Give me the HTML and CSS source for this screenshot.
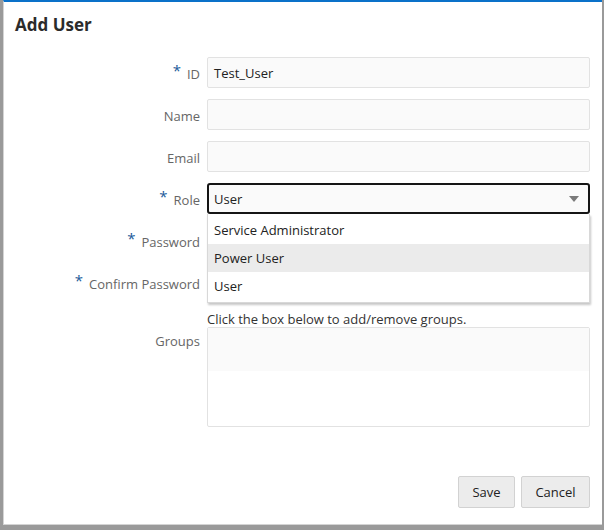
FILE: index.html
```html
<!DOCTYPE html>
<html>
<head>
<meta charset="utf-8">
<link rel="stylesheet" href="styles.css">
</head>
<body>
<div class="backdrop">
  <div class="dialog">
    <h1 class="title">Add User</h1>
    <form class="form">
      <label class="label"><span class="req">*</span>ID</label>
      <div class="input">Test_User</div>

      <label class="label">Name</label>
      <div class="input"></div>

      <label class="label">Email</label>
      <div class="input"></div>

      <label class="label"><span class="req">*</span>Role</label>
      <div class="select-wrap">
        <div class="select">User<span class="arrow"></span></div>
        <ul class="menu">
          <li class="opt">Service Administrator</li>
          <li class="opt hover">Power User</li>
          <li class="opt">User</li>
        </ul>
      </div>

      <label class="label"><span class="req">*</span>Password</label>
      <div class="input"></div>

      <label class="label"><span class="req">*</span>Confirm Password</label>
      <div class="input"></div>

      <div></div>
      <div class="hint">Click the box below to add/remove groups.</div>

      <label class="label label-top">Groups</label>
      <div class="groups"><div class="groups-inner"></div></div>
    </form>
    <div class="footer">
      <button type="button" class="btn">Save</button>
      <button type="button" class="btn">Cancel</button>
    </div>
  </div>
</div>
</body>
</html>
```
FILE: styles.css
```css
html, body {
  margin: 0;
  padding: 0;
}
body {
  width: 604px;
  height: 530px;
  background: #9a9a9a;
  font-family: "Open Sans", "Noto Sans", sans-serif;
  overflow: hidden;
}
.backdrop {
  display: flex;
  padding-left: 3px;
}
.dialog {
  box-sizing: border-box;
  width: 599px;
  height: 525px;
  background: #fff;
  border-top: 2px solid #0a71c9;
  border-left: 1px solid #d4d4d4;
  border-bottom: 1px solid #d4d4d4;
  display: flex;
  flex-direction: column;
  padding-right: 12px;
}
.title {
  margin: 0;
  padding: 12px 0 0 11px;
  font-size: 17px;
  font-weight: 700;
  color: #2b2b2b;
  line-height: 22px;
  height: 32px;
}
.form {
  margin: 0;
  margin-top: 11px;
  display: grid;
  grid-template-columns: 196px 1fr;
  column-gap: 7px;
  row-gap: 11px;
  align-items: center;
}
.label {
  text-align: right;
  font-size: 13px;
  color: #666;
  line-height: 18px;
  padding-top: 2px;
}
.label-top {
  align-self: start;
  padding-top: 5px;
}
.req {
  color: #215a9a;
  font-size: 15px;
  vertical-align: 3px;
  margin-right: 6px;
  line-height: 10px;
}
.input {
  box-sizing: border-box;
  height: 31px;
  background: #fafafa;
  border: 1px solid #e2e2e2;
  border-radius: 2px;
  font-size: 13px;
  color: #222;
  padding: 1px 6px 0;
  line-height: 29px;
}
.select-wrap {
  position: relative;
}
.select {
  box-sizing: border-box;
  height: 31px;
  background: #fafafa;
  border: 2px solid #151515;
  border-radius: 3px;
  font-size: 13px;
  color: #222;
  padding: 1px 5px 0;
  line-height: 27px;
  position: relative;
}
.arrow {
  position: absolute;
  right: 9px;
  top: 11px;
  width: 0;
  height: 0;
  border-left: 5px solid transparent;
  border-right: 5px solid transparent;
  border-top: 6px solid #7a7a7a;
}
.menu {
  position: absolute;
  left: 0;
  right: 0;
  top: 31px;
  margin: 0;
  padding: 2px 0 2px;
  list-style: none;
  background: #fff;
  border: 1px solid #d8d8d8;
  border-top: none;
  box-shadow: 1px 2px 2px rgba(0,0,0,0.22);
  z-index: 2;
}
.opt {
  height: 28px;
  line-height: 28px;
  padding: 0 6px;
  font-size: 13px;
  color: #222;
}
.opt.hover {
  background: #ebebeb;
}
.hint {
  font-size: 13px;
  color: #333;
  line-height: 18px;
  margin-top: 1px;
  margin-bottom: -12px;
}
.groups {
  box-sizing: border-box;
  height: 100px;
  border: 1px solid #e2e2e2;
  border-radius: 2px;
  background: #fff;
}
.groups-inner {
  height: 43px;
  background: #fafafa;
}
.footer {
  margin-top: auto;
  display: flex;
  justify-content: flex-end;
  gap: 6px;
  padding-bottom: 16px;
}
.btn {
  box-sizing: border-box;
  height: 32px;
  padding: 0 12px;
  background: #ececec;
  border: 1px solid #d2d2d2;
  border-radius: 2px;
  font-family: "Open Sans", "Noto Sans", sans-serif;
  font-size: 13px;
  color: #222;
}
.btn:first-child {
  width: 57px;
}
.btn:last-child {
  width: 69px;
}
```
